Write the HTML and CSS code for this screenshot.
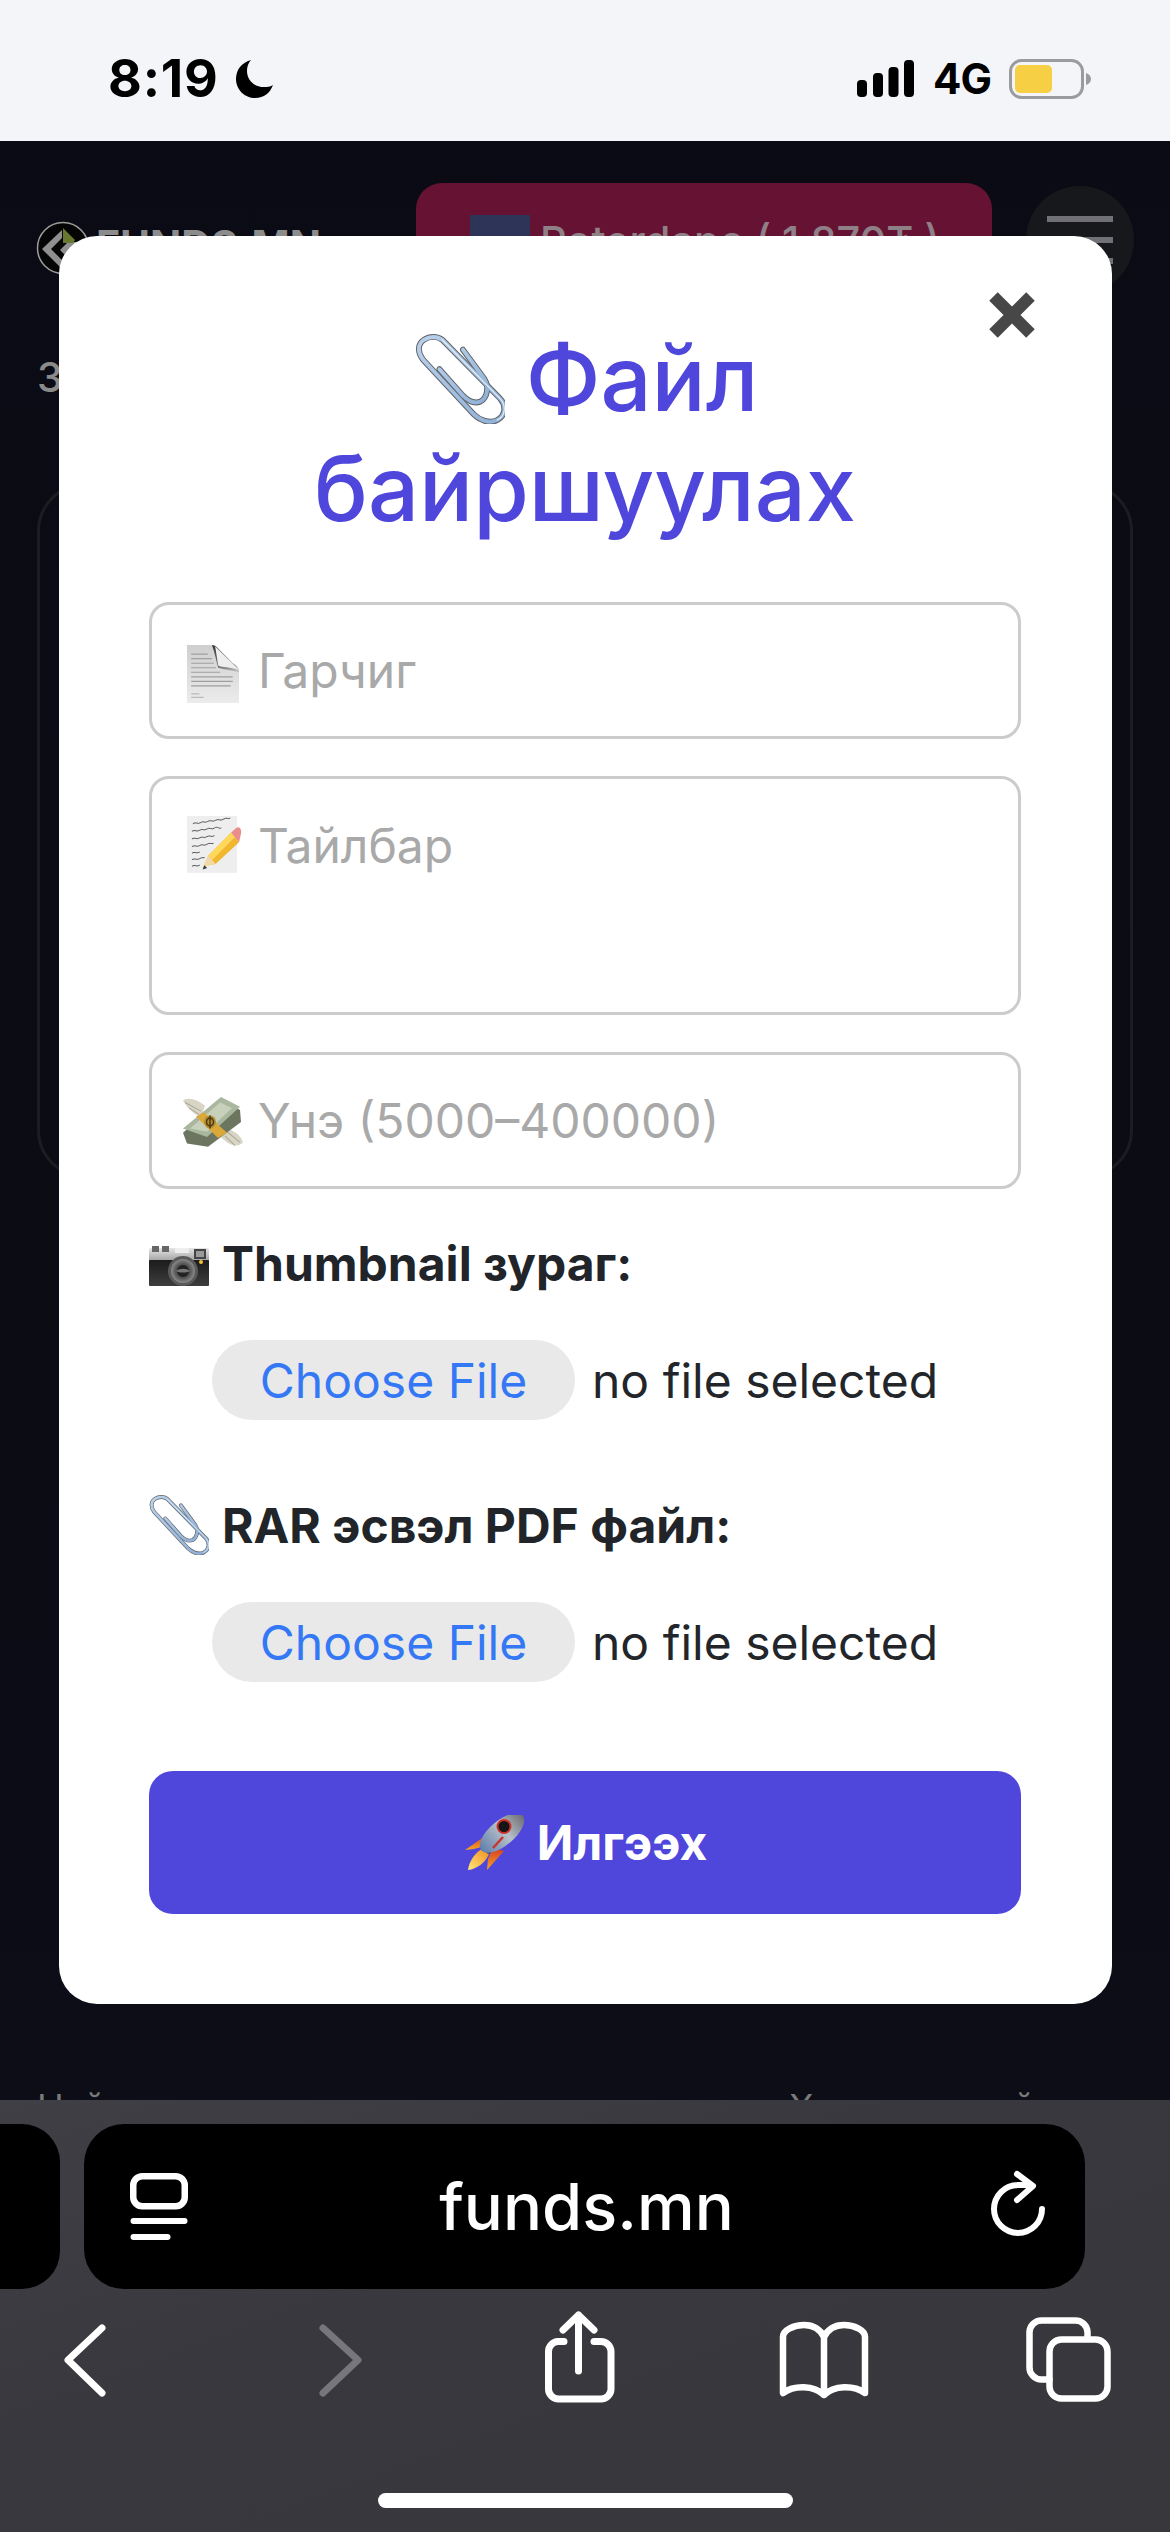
FILE: index.html
```html
<!DOCTYPE html>
<html lang="mn">
<head>
<meta charset="utf-8">
<title>funds.mn</title>
<link rel="stylesheet" href="styles.css">
</head>
<body>
<svg class="defs" width="0" height="0" aria-hidden="true">
  <defs>
    <linearGradient id="clipBlue" x1="0" y1="0" x2="1" y2="1"><stop offset="0" stop-color="#b9d0ea"/><stop offset="1" stop-color="#8fb0d6"/></linearGradient>
    <symbol id="paperclip" viewBox="12 26 92 92">
      <g fill="none" stroke-linecap="round" stroke-linejoin="round">
        <path d="M40 32 99 92C106 100 104 110 96 114 88 118 78 114 72 108L20 52C14 44 15 36 21 32 27 28 35 28 40 32" stroke="#5f6268" stroke-width="6"/>
        <path d="M61 42 83 72C88 80 86 91 79 95 72 98 66 94 61 89L37 62" stroke="#5f6268" stroke-width="6"/>
        <path d="M40 32 99 92C106 100 104 110 96 114 88 118 78 114 72 108L20 52C14 44 15 36 21 32 27 28 35 28 40 32" stroke="url(#clipBlue)" stroke-width="4"/>
        <path d="M61 42 83 72C88 80 86 91 79 95 72 98 66 94 61 89L37 62" stroke="url(#clipBlue)" stroke-width="4"/>
        <path d="M40 32 99 92C106 100 104 110 96 114" stroke="#e6eff8" stroke-width="1.200"/>
      </g>
    </symbol>
  </defs>
</svg>

<div class="phone">
  <header class="status">
    <div class="status-left">
      <span class="clock">8:19</span>
      <svg class="moon" viewBox="0 0 38 40"><path d="M16 1C6 4 1 11 1 20 1 31 10 39 20 39 29 39 35 34 38 26 35 28 32 28 29 28 19 28 12 21 12 12 12 8 13 4 16 1Z"/></svg>
    </div>
    <div class="status-right">
      <svg class="signal" viewBox="0 0 57 37"><rect x="0" y="20" width="10" height="17" rx="4"/><rect x="16" y="13" width="10" height="24" rx="4"/><rect x="31.500" y="7" width="10" height="30" rx="4"/><rect x="47" y="0" width="10" height="37" rx="4"/></svg>
      <span class="net">4G</span>
      <svg class="battery" viewBox="0 0 82 40"><rect x="1.500" y="1.500" width="72" height="37" rx="11" fill="none" stroke="#9b9b9f" stroke-width="3"/><rect x="6" y="6" width="37" height="28" rx="5" fill="#f7cf44"/><path d="M77 14c3 1 5 3 5 6s-2 5-5 6z" fill="#9b9b9f"/></svg>
    </div>
  </header>

  <main class="site">
    <div class="site-head">
      <div class="logo">
        <svg class="logo-mark" viewBox="0 0 54 54">
          <circle cx="27" cy="27" r="25.500" fill="#050505" stroke="#9c9c9c" stroke-width="1.500"/>
          <path d="M6 28 26 9V17L15 28 26 39 30 35 24 29 32 21H40L48 28 27 49Z" fill="#8f8f8f"/>
          <path d="M27 7 39 19 37 22 27 22Z" fill="#66792f"/>
        </svg>
        <span class="logo-text">FUNDS.MN</span>
      </div>
      <div class="balance">
        <span class="flag"></span>
        <span class="balance-text">Roterdapo ( 1 870₮ )</span>
      </div>
      <div class="burger"><i></i><i></i><i></i></div>
    </div>
    <h2 class="site-title">Зарагдаж буй файл</h2>
    <section class="bg-card"></section>
    <div class="site-foot"><span class="foot-left">Найз</span><span>Хэрэглэгчдийн</span></div>

    <div class="modal">
      <button class="close" type="button" aria-label="Хаах">
        <svg viewBox="0 0 46 46"><path d="M4.500 4.500 41.500 41.500M41.500 4.500 4.500 41.500" stroke="#474747" stroke-width="12" fill="none"/></svg>
      </button>
      <h1 class="modal-title"><svg class="title-clip"><use href="#paperclip"/></svg> Файл<br>байршуулах</h1>

      <div class="field">
        <svg class="emo emo-doc" viewBox="0 0 50 51" preserveAspectRatio="none">
          <defs>
            <linearGradient id="docFill" x1="0" y1="0" x2="0" y2="1"><stop offset="0" stop-color="#cfcfcf"/><stop offset="1" stop-color="#ececec"/></linearGradient>
            <linearGradient id="curl" x1="0" y1="0" x2="1" y2="1"><stop offset="0" stop-color="#333"/><stop offset=".6" stop-color="#7f7f7f"/><stop offset="1" stop-color="#c9c9c9"/></linearGradient>
          </defs>
          <path d="M0 0H24L50 22V51H0Z" fill="url(#docFill)"/>
          <path d="M4 8H20M4 12H24M4 16H26M4 20H28M4 24H32M4 28H44M4 32H44M4 36H42" stroke="#a0a0a0" stroke-width="1"/>
          <path d="M4 43H12M4 46H16" stroke="#bbb" stroke-width="1"/>
          <path d="M24 0C27 7 28 14 30 20 36 22 44 22 50 24 50 20 48 18 44 16L30 3C28 1 26 0 24 0Z" fill="url(#curl)"/>
          <path d="M27 1 50 22C42 19 34 20 30 18 29 12 28 6 27 1Z" fill="#eee"/>
        </svg>
        <span class="ph">Гарчиг</span>
      </div>

      <div class="field field-area">
        <svg class="emo emo-memo" viewBox="0 0 56 54" preserveAspectRatio="none">
          <rect x="0" y="0" width="51" height="52" fill="#eeeeee"/>
          <g fill="none" stroke="#4a4a4a" stroke-width=".9">
            <path d="M6 7c3-2 5 1 8-1s4 1 7-1 5 1 8-1 5 1 8-1 5 0 7-1"/>
            <path d="M5 14c3-2 5 1 8-1s4 1 7-1 5 1 8-1 4 1 7 0"/>
            <path d="M5 21c3-2 5 1 8-1s4 1 7-1 5 1 8-1"/>
            <path d="M5 28c3-2 5 1 8-1s4 1 7-1 5 0 7-1"/>
            <path d="M5 34c3-2 5 1 8-1"/>
            <path d="M5 40c3-2 5 1 8-1s4 0 5-1"/>
            <path d="M5 46c3-2 5 1 8-1"/>
          </g>
          <path d="M17 46 22 36 45 15 53 24 29 44Z" fill="#f0b72f"/>
          <path d="M22 36 45 15 49 19 26 40Z" fill="#ffd75a"/>
          <path d="M17 46 22 36 29 44Z" fill="#f3d9a8"/>
          <path d="M16 49 17.500 45 20.500 47.500Z" fill="#333"/>
          <path d="M45 15 50 11C53 9 56 12 55 16L53 24Z" fill="#e98d8d"/>
        </svg>
        <span class="ph">Тайлбар</span>
      </div>

      <div class="field">
        <svg class="emo emo-money" viewBox="0 0 60 50" preserveAspectRatio="none">
          <path d="M0 4C6 1 14 3 22 9L18 20C12 17 4 12 0 4Z" fill="#d9d5c5"/>
          <path d="M2 6 18 14M6 11 16 17" stroke="#aaa697" stroke-width="1"/>
          <path d="M42 30C50 31 58 36 60 43 54 48 46 46 38 38Z" fill="#d9d5c5"/>
          <path d="M44 33 57 43M42 37 52 46" stroke="#aaa697" stroke-width="1"/>
          <path d="M0 34 38 3 57 13 58 24 25 47 4 44Z" fill="#6c7560"/>
          <path d="M0 30 38 1 57 10 24 38Z" fill="#aab79f"/>
          <path d="M7 30 37 6 49 11 24 33Z" fill="#c6d0ba"/>
          <path d="M13 19 21 15 44 34 35 39Z" fill="#dba93a"/>
          <circle cx="27" cy="24" r="6" fill="#b88e32"/>
          <path d="M27 18V30" stroke="#4b3a13" stroke-width="1.500"/>
          <circle cx="27" cy="24" r="3.500" fill="none" stroke="#4b3a13" stroke-width="1.500"/>
        </svg>
        <span class="ph">Үнэ (5000–400000)</span>
      </div>

      <div class="file-label label-first">
        <svg class="emo-camera" viewBox="0 0 60 40">
          <defs>
            <linearGradient id="camTop" x1="0" y1="0" x2="0" y2="1"><stop offset="0" stop-color="#e5e5e5"/><stop offset="1" stop-color="#9d9d9d"/></linearGradient>
            <linearGradient id="camBody" x1="0" y1="0" x2="0" y2="1"><stop offset="0" stop-color="#1c1c1c"/><stop offset="1" stop-color="#3d3d3d"/></linearGradient>
            <radialGradient id="camLens"><stop offset="0" stop-color="#2a2a2a"/><stop offset=".6" stop-color="#555"/><stop offset="1" stop-color="#8a8a8a"/></radialGradient>
          </defs>
          <rect x="0" y="2" width="60" height="14" rx="2" fill="url(#camTop)"/>
          <rect x="0" y="14" width="60" height="26" rx="1" fill="url(#camBody)"/>
          <rect x="3" y="0" width="7" height="6" fill="#666"/><rect x="13" y="0" width="7" height="6" fill="#666"/>
          <rect x="26" y="2" width="14" height="5" fill="#eee"/>
          <rect x="45" y="3" width="12" height="10" fill="#444"/><rect x="47" y="5" width="8" height="6" fill="#9a9a9a"/>
          <circle cx="34" cy="25" r="15" fill="#5a5a5a"/>
          <circle cx="34" cy="25" r="12" fill="url(#camLens)"/>
          <circle cx="34" cy="25" r="6" fill="#222"/>
          <path d="M27 25c4-3 10-3 14 0-4 2-10 2-14 0Z" fill="#777"/>
          <circle cx="52" cy="16" r="2" fill="#f2c33a"/>
        </svg>
        <span>Thumbnail зураг:</span>
      </div>
      <div class="file-row">
        <button class="file-btn" type="button">Choose File</button>
        <span class="file-name">no file selected</span>
      </div>

      <div class="file-label label-second">
        <svg class="emo-clip"><use href="#paperclip"/></svg>
        <span>RAR эсвэл PDF файл:</span>
      </div>
      <div class="file-row">
        <button class="file-btn" type="button">Choose File</button>
        <span class="file-name">no file selected</span>
      </div>

      <button class="submit" type="button">
        <svg class="rocket" viewBox="0 0 62 55">
          <defs>
            <linearGradient id="rocketBody" x1="0" y1="0" x2="1" y2="0"><stop offset="0" stop-color="#5f7fae"/><stop offset=".55" stop-color="#b8c0c8"/><stop offset="1" stop-color="#6d6f74"/></linearGradient>
            <linearGradient id="fin" x1="0" y1="0" x2="0" y2="1"><stop offset="0" stop-color="#d63a24"/><stop offset="1" stop-color="#f5a623"/></linearGradient>
            <linearGradient id="flame" x1="1" y1="0" x2="0" y2="1"><stop offset="0" stop-color="#f08a1c"/><stop offset="1" stop-color="#ffe87a"/></linearGradient>
          </defs>
          <path d="M2 35 25 19 22 31 11 34Z" fill="url(#fin)"/>
          <path d="M24 55 41 36 30 33 25 44Z" fill="url(#fin)"/>
          <path d="M5 55C6 46 12 38 20 33L26 39C22 48 14 54 5 55Z" fill="url(#flame)"/>
          <path d="M19 33 24 29 30 35 25 39Z" fill="#3b3b3b"/>
          <ellipse cx="39" cy="18" rx="27" ry="12.500" transform="rotate(-40 39 18)" fill="url(#rocketBody)"/>
          <circle cx="41" cy="11.500" r="7.500" fill="#cf2f2a"/>
          <circle cx="41" cy="11.500" r="5.500" fill="#151515"/>
          <path d="M30 33 40 22" stroke="#c9352a" stroke-width="2.500"/>
        </svg>
        <span>Илгээх</span>
      </button>
    </div>
  </main>

  <footer class="safari">
    <div class="url-row">
      <div class="tab-stub"></div>
      <div class="url-bar">
        <svg class="reader" viewBox="0 0 58 68">
          <rect x="3.250" y="3.250" width="51.500" height="30" rx="9" fill="none" stroke="#fff" stroke-width="6.500"/>
          <rect x="0.500" y="45" width="57" height="6" rx="3" fill="#fff"/>
          <rect x="0.500" y="61" width="40" height="6" rx="3" fill="#fff"/>
        </svg>
        <span class="url">funds.mn</span>
        <svg class="reload" viewBox="0 0 62 70">
          <path d="M55 41A24 24 0 1 1 31 17H44M30 6 46 18 30 32" fill="none" stroke="#fff" stroke-width="6" stroke-linecap="round" stroke-linejoin="round"/>
        </svg>
      </div>
    </div>
    <nav class="toolbar">
      <svg class="tool" viewBox="0 0 120 100"><path d="M77 23 43 55 77 88" class="tool-line"/></svg>
      <svg class="tool tool-fwd" viewBox="0 0 120 100"><path d="M43 23 78 55 43 88" class="tool-line tool-off"/></svg>
      <svg class="tool tool-share" viewBox="0 0 120 100"><path d="M44 36.500H38A10 10 0 0 0 28.500 46.500V84A10 10 0 0 0 38.500 94H81A10 10 0 0 0 91 84V46.500A10 10 0 0 0 81 36.500H74M58.500 10V66M43 25 58.500 10 74 25" class="tool-line"/></svg>
      <svg class="tool" viewBox="0 0 120 100"><path d="M19 88V32C19 25 30 20 40 20 49 20 56 24 60 32 64 24 71 20 80 20 90 20 101 25 101 32V88C90 80 70 80 60 90 50 80 30 80 19 88ZM60 32V90" class="tool-line tool-thin"/></svg>
      <svg class="tool" viewBox="0 0 120 100"><path d="M79.500 31V27A12 12 0 0 0 67.500 15.500H33.500A12 12 0 0 0 21.500 27V62A12 12 0 0 0 33.500 74.500H41.500" class="tool-line tool-thin"/><rect x="41.500" y="34.500" width="58" height="59" rx="12" class="tool-line tool-thin"/></svg>
    </nav>
    <div class="home-bar"></div>
  </footer>
</div>
</body>
</html>
```

FILE: styles.css
```css
* { box-sizing: border-box; }

html, body {
  margin: 0;
  padding: 0;
  background: #0a0b14;
}

body {
  font-family: Inter, "Noto Sans", "Liberation Sans", sans-serif;
  overflow: hidden;
}

.defs { position: absolute; }

.phone {
  width: 1170px;
  height: 2532px;
  display: flex;
  flex-direction: column;
  overflow: hidden;
}

/* status bar */
.status {
  height: 141px;
  flex: none;
  background: #f4f5f9;
  display: flex;
  justify-content: space-between;
  align-items: center;
  padding: 16px 79px 0 108px;
}

.status-left, .status-right {
  display: flex;
  align-items: center;
}

.clock {
  font-size: 52px;
  font-weight: 700;
  color: #000;
  letter-spacing: 0.800px;
  width: 127px;
}

.moon { width: 38px; height: 40px; fill: #000; }

.signal { width: 57px; height: 37px; fill: #000; }

.net {
  font-size: 42px;
  font-weight: 700;
  color: #000;
  margin: 0 18px 0 19px;
  letter-spacing: -1px;
}

.battery { width: 82px; height: 40px; }

/* dimmed site behind the modal */
.site {
  position: relative;
  flex: none;
  height: 1959px;
  overflow: hidden;
  background: linear-gradient(#0a0b14, #0b0c14 60%, #0c0d17);
}

.site-head {
  display: flex;
  align-items: flex-start;
  padding: 42px 36px 0;
  height: 166px;
}

.logo {
  display: flex;
  align-items: center;
  gap: 6px;
  margin-top: 38px;
  margin-right: auto;
}

.logo-mark { width: 54px; height: 54px; }

.logo-text {
  font-size: 41px;
  font-weight: 700;
  line-height: 48px;
  margin-bottom: 6px;
  color: #8c8c8c;
}

.balance {
  width: 576px;
  height: 124px;
  background: #661233;
  border-radius: 26px;
  display: flex;
  align-items: center;
  gap: 10px;
  padding-left: 54px;
}

.flag { width: 60px; height: 60px; background: #2e3358; }

.balance-text {
  font-size: 41.500px;
  font-weight: 500;
  line-height: 50px;
  margin-bottom: 8px;
  color: #8f7f86;
  white-space: nowrap;
}

.burger {
  width: 108px;
  height: 108px;
  margin: 3px 0 0 34px;
  border-radius: 50%;
  background: #17181c;
  display: flex;
  flex-direction: column;
  align-items: center;
  justify-content: center;
  gap: 15px;
}

.burger i {
  display: block;
  width: 66px;
  height: 6px;
  background: #707076;
}

.site-title {
  margin: 0 0 0 37px;
  font-size: 41px;
  font-weight: 500;
  line-height: 50px;
  color: #8a8a8a;
  height: 176px;
  padding-top: 45px;
}

.bg-card {
  margin: 0 37px;
  width: 1096px;
  height: 695px;
  border: 3px solid #1c1d22;
  border-radius: 48px;
}

.site-foot {
  display: flex;
  margin: 907px 0 0 37px;
  font-size: 36px;
  line-height: 44px;
  color: #7a7a7a;
}

.foot-left { width: 752px; }

/* modal */
.modal {
  position: absolute;
  left: 59px;
  top: 95px;
  width: 1053px;
  height: 1768px;
  background: #fff;
  border-radius: 38px;
  padding: 88px 91px 90px 90px;
  display: flex;
  flex-direction: column;
}

.close {
  position: absolute;
  top: 56px;
  right: 77px;
  width: 46px;
  height: 46px;
  padding: 0;
  border: 0;
  background: none;
}

.close svg { display: block; width: 46px; height: 46px; }

.modal-title {
  margin: 0 0 58px;
  font-size: 90px;
  font-weight: 500;
  line-height: 110px;
  color: #4f46dc;
  text-align: center;
}

.title-clip {
  width: 90px;
  height: 90px;
  vertical-align: -13px;
  margin: 0 -3px 0 3px;
}

.field {
  height: 137px;
  flex: none;
  border: 3px solid #ccc;
  border-radius: 20px;
  display: flex;
  align-items: center;
  padding-left: 35px;
  margin-bottom: 37px;
}

.field-area {
  height: 239px;
  align-items: flex-start;
  padding-top: 5px;
}

.ph {
  font-size: 48px;
  color: #a9a9a9;
  line-height: 58px;
}

.field-area .ph { margin-top: 33px; }

.emo { flex: none; margin-right: 19px; }

.emo-doc { width: 52px; height: 58px; margin-top: 6px; }
.emo-memo { width: 55px; height: 59px; margin: 32px 16px 0 0; }
.emo-money { width: 60px; height: 54px; margin: 4px 15px 0 -4px; }

.file-label {
  display: flex;
  align-items: center;
  gap: 13px;
  height: 58px;
  font-size: 48px;
  font-weight: 700;
  color: #212529;
}

.label-first { margin-top: 8px; }
.label-second { margin-top: 76px; }

.emo-camera { width: 60px; height: 40px; margin-top: 5px; }
.emo-clip { width: 60px; height: 60px; }

.file-row {
  display: flex;
  align-items: center;
  gap: 17px;
  margin: 48px 0 0 63px;
}

.file-btn {
  width: 363px;
  height: 80px;
  padding: 0;
  border: 0;
  border-radius: 40px;
  background: #e9e9e9;
  color: #3478f6;
  font: 400 48px Inter, "Noto Sans", sans-serif;
}

.file-name {
  font-size: 48px;
  color: #22252a;
}

.submit {
  margin-top: 89px;
  height: 143px;
  flex: none;
  border: 0;
  border-radius: 24px;
  background: #4f46dc;
  color: #fff;
  font: 700 48px Inter, "Noto Sans", sans-serif;
  display: flex;
  align-items: center;
  justify-content: center;
  gap: 12px;
}

.rocket { width: 62px; height: 55px; }

/* safari chrome */
.safari {
  flex: none;
  height: 432px;
  background: linear-gradient(160deg, #3f3f45, #38383e 40%, #37373c);
  position: relative;
  z-index: 1;
  display: flex;
  flex-direction: column;
}

.url-row {
  display: flex;
  gap: 24px;
  padding-top: 24px;
}

.tab-stub {
  width: 60px;
  height: 165px;
  background: #000;
  border-radius: 0 38px 38px 0;
}

.url-bar {
  width: 1001px;
  height: 165px;
  background: #000;
  border-radius: 40px;
  display: grid;
  grid-template-columns: 1fr auto 1fr;
  align-items: center;
  padding: 0 36px 0 46px;
}

.reader { width: 58px; height: 68px; }

.url {
  font-size: 65px;
  font-weight: 500;
  color: #fff;
  margin-right: 6px;
}

.reload {
  width: 62px;
  height: 70px;
  justify-self: end;
  margin-bottom: 7px;
}

.toolbar {
  display: flex;
  gap: 124px;
  padding: 16px 0 0 25px;
}

.tool { width: 120px; height: 100px; flex: none; }
.tool-fwd { margin-left: 11px; }
.tool-share { margin-left: -4px; }

.tool-line {
  fill: none;
  stroke: #fff;
  stroke-width: 7;
  stroke-linecap: round;
  stroke-linejoin: round;
}

.tool-off { stroke: #76767c; }
.tool-thin { stroke-width: 6.500; }

.home-bar {
  position: absolute;
  left: 378px;
  top: 393px;
  width: 415px;
  height: 15px;
  border-radius: 8px;
  background: #fff;
}
```
